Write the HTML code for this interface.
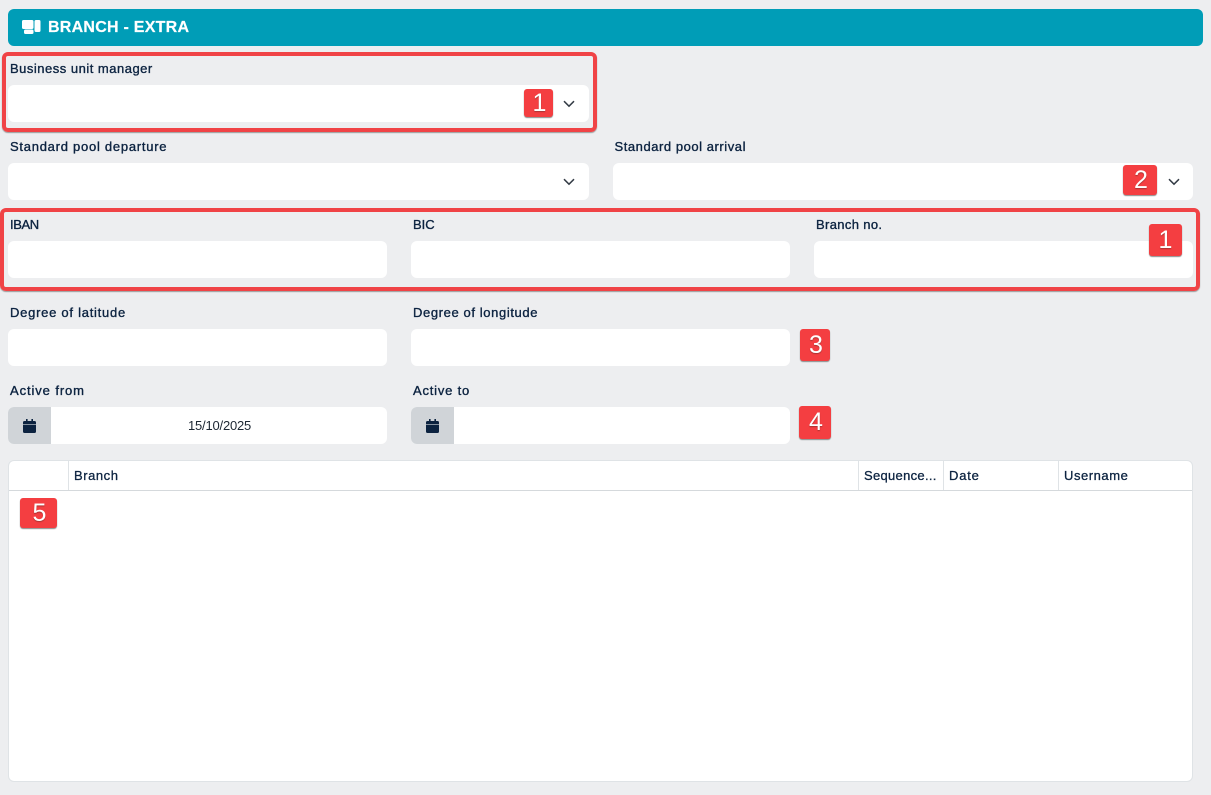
<!DOCTYPE html>
<html><head><meta charset="utf-8"><style>
html,body{margin:0;padding:0;width:1211px;height:795px;overflow:hidden;background:#edeef0;font-family:"Liberation Sans",sans-serif;color:#0c2340}
div,span{position:absolute;box-sizing:border-box}
.h{left:8px;top:9px;width:1195px;height:37px;background:#009db7;border-radius:6px}
.t{left:48px;top:18px;color:#fff;font-weight:bold;font-size:16px;line-height:19px;white-space:nowrap;letter-spacing:.25px;-webkit-text-stroke:.2px #fff}
.l{font-size:13px;line-height:16px;white-space:nowrap;-webkit-text-stroke:.35px #0c2340}
.f{background:#fff;border-radius:6px;height:37px}
.b{background:#f43e41;border-radius:3px;color:#fff;font-size:25px;text-align:center;box-shadow:0 1px 1px #8a8a8a;text-shadow:0 1px 1px #a83434;padding-left:2px}
.r{border:4px solid #f04346;border-radius:6px;box-shadow:0 1px 1px #999}
.ad{left:0;width:43px;height:37px;background:#d0d4d8;border-radius:6px 0 0 6px}
.tb{left:8px;top:460px;width:1185px;height:322px;background:#fff;border:1px solid #dfe3e6;border-radius:6px}
.hl{left:0;top:29px;width:1183px;height:1px;background:#d5d9dc}
.c{top:0;width:1px;height:29px;background:#dfe3e6}
.th{top:7px;font-size:13px;line-height:16px;white-space:nowrap;letter-spacing:.4px;-webkit-text-stroke:.3px #0c2340}
svg{position:absolute}
</style></head><body>
<div class="h"></div>
<svg style="left:22px;top:19px" width="19" height="16" viewBox="0 0 19 16"><rect x="0" y="1" width="11.500" height="9" rx="1.500" fill="#fff"/><rect x="12.500" y="1" width="6" height="12" rx="1.500" fill="#fff"/><rect x="2" y="10.500" width="9.500" height="4.500" rx="1.500" fill="#fff"/></svg>
<div class="t">BRANCH - EXTRA</div>

<div class="l" style="left:10px;top:61px;letter-spacing:.5px">Business unit manager</div>
<div class="f" style="left:8px;top:85px;width:581px"></div>
<svg style="left:563px;top:100px" width="12" height="8" viewBox="0 0 12 8"><path d="M1 1.200L6 6.200L11 1.200" fill="none" stroke="#333b45" stroke-width="1.500"/></svg>

<div class="l" style="left:10px;top:139px;letter-spacing:.74px">Standard pool departure</div>
<div class="f" style="left:8px;top:163px;width:581px"></div>
<svg style="left:563px;top:178px" width="12" height="8" viewBox="0 0 12 8"><path d="M1 1.200L6 6.200L11 1.200" fill="none" stroke="#333b45" stroke-width="1.500"/></svg>

<div class="l" style="left:614.500px;top:139px;letter-spacing:.55px">Standard pool arrival</div>
<div class="f" style="left:613px;top:163px;width:580px"></div>
<svg style="left:1167.500px;top:178px" width="12" height="8" viewBox="0 0 12 8"><path d="M1 1.200L6 6.200L11 1.200" fill="none" stroke="#333b45" stroke-width="1.500"/></svg>

<div class="l" style="left:10px;top:217px;letter-spacing:-.4px">IBAN</div>
<div class="f" style="left:8px;top:241px;width:379px"></div>
<div class="l" style="left:413px;top:217px;letter-spacing:0">BIC</div>
<div class="f" style="left:411px;top:241px;width:379px"></div>
<div class="l" style="left:816px;top:217px;letter-spacing:.35px">Branch no.</div>
<div class="f" style="left:814px;top:241px;width:379px"></div>

<div class="l" style="left:10px;top:305px;letter-spacing:.74px">Degree of latitude</div>
<div class="f" style="left:8px;top:329px;width:379px"></div>
<div class="l" style="left:413px;top:305px;letter-spacing:.61px">Degree of longitude</div>
<div class="f" style="left:411px;top:329px;width:379px"></div>

<div class="l" style="left:10px;top:383px;letter-spacing:.9px">Active from</div>
<div class="f" style="left:8px;top:407px;width:379px"><div class="ad"></div>
<svg style="left:15px;top:12px" width="13" height="14" viewBox="0 0 13 14"><path d="M3 0h1.600v2h3.800V0H10v2h1.500A1.500 1.500 0 0 1 13 3.500V5H0V3.500A1.500 1.500 0 0 1 1.500 2H3zM0 5.600h13v6.900A1.500 1.500 0 0 1 11.500 14h-10A1.500 1.500 0 0 1 0 12.500z" fill="#0c2340"/></svg>
<div style="left:180px;top:11px;font-size:13px;line-height:16px;color:#1d2733;white-space:nowrap;letter-spacing:-.2px">15/10/2025</div></div>
<div class="l" style="left:413px;top:383px;letter-spacing:.8px">Active to</div>
<div class="f" style="left:411px;top:407px;width:379px"><div class="ad"></div>
<svg style="left:15px;top:12px" width="13" height="14" viewBox="0 0 13 14"><path d="M3 0h1.600v2h3.800V0H10v2h1.500A1.500 1.500 0 0 1 13 3.500V5H0V3.500A1.500 1.500 0 0 1 1.500 2H3zM0 5.600h13v6.900A1.500 1.500 0 0 1 11.500 14h-10A1.500 1.500 0 0 1 0 12.500z" fill="#0c2340"/></svg></div>

<div class="tb">
<div class="hl"></div>
<div class="c" style="left:59px"></div>
<div class="c" style="left:849px"></div>
<div class="c" style="left:934px"></div>
<div class="c" style="left:1049px"></div>
<div class="th" style="left:65px;letter-spacing:.55px">Branch</div>
<div class="th" style="left:855px;letter-spacing:.3px">Sequence...</div>
<div class="th" style="left:940px;letter-spacing:.8px">Date</div>
<div class="th" style="left:1055px;letter-spacing:.55px">Username</div>
</div>

<div class="r" style="left:2px;top:52px;width:595px;height:80px"></div>
<div class="r" style="left:0;top:208px;width:1200px;height:83px"></div>

<div class="b" style="left:524px;top:89px;width:29px;height:28px;line-height:28px">1</div>
<div class="b" style="left:1123px;top:165px;width:34px;height:30px;line-height:30px">2</div>
<div class="b" style="left:1149px;top:224px;width:33px;height:32px;line-height:32px;padding-left:0">1</div>
<div class="b" style="left:800px;top:329px;width:30px;height:32px;line-height:32px">3</div>
<div class="b" style="left:799px;top:406px;width:32px;height:33px;line-height:33px">4</div>
<div class="b" style="left:20px;top:498px;width:37px;height:30px;line-height:30px">5</div>
</body></html>
